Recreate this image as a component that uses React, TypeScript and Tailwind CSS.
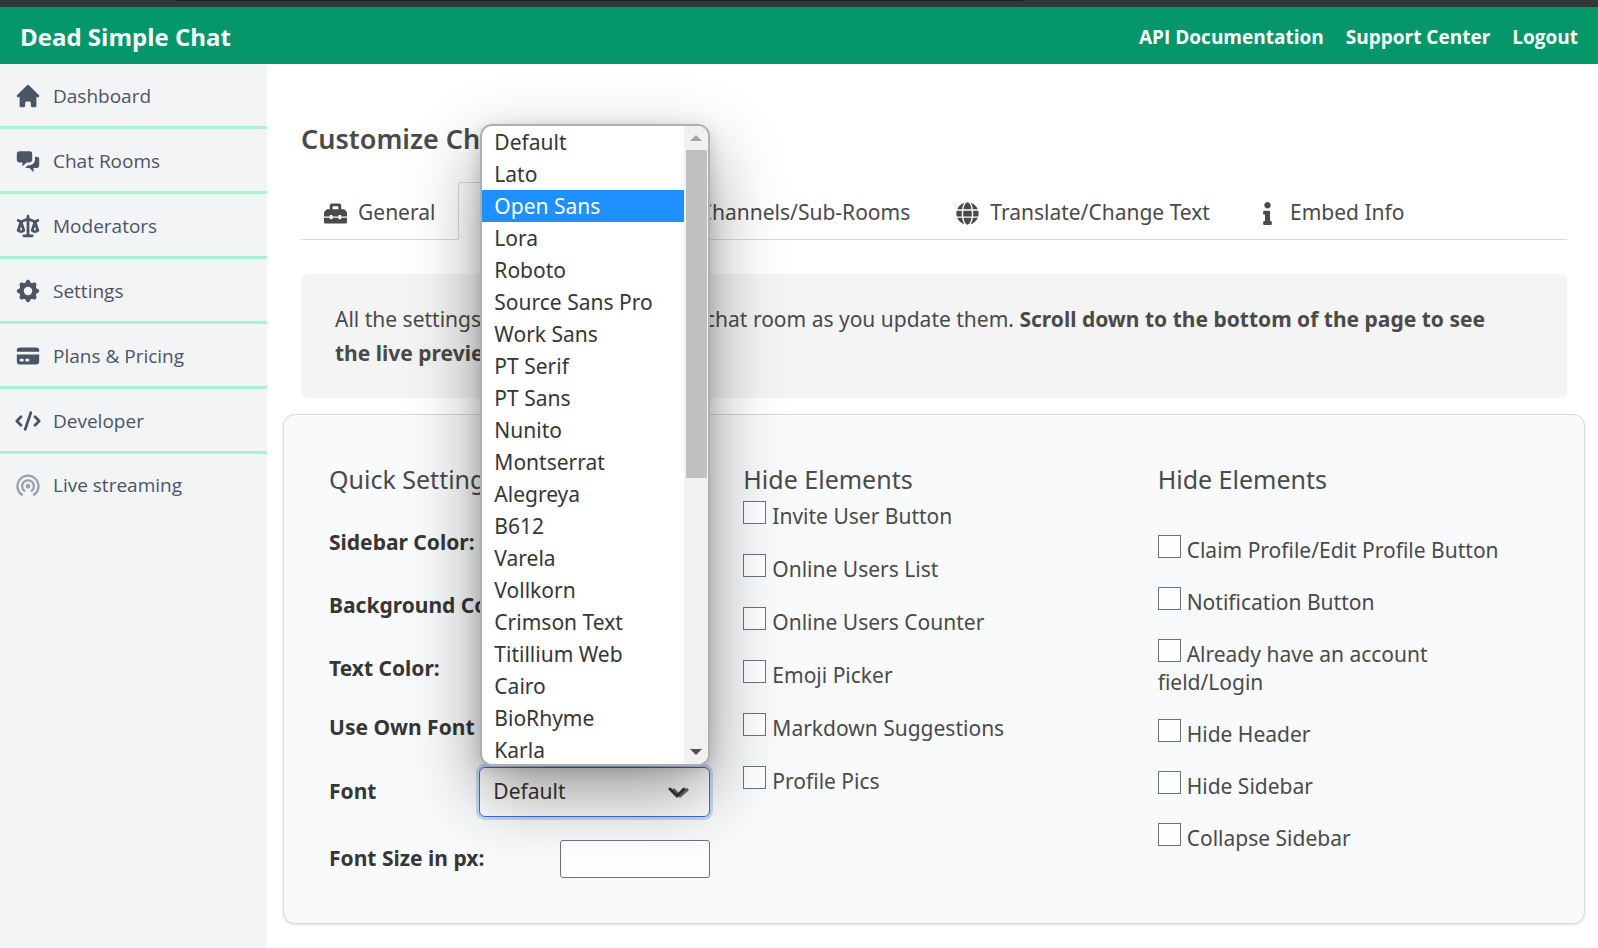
import clsx from "clsx";
import { useState } from "react";
import {
    FaComments,
    FaGlobe,
    FaInfo,
    FaPaintBrush,
    FaToolbox,
} from "react-icons/fa";
import {
    HiChatAlt2,
    HiCode,
    HiCog,
    HiCreditCard,
    HiHome,
    HiScale,
} from "react-icons/hi";
import { MdWifiTethering } from "react-icons/md";

const menu = [
    { label: "Dashboard", icon: HiHome },
    { label: "Chat Rooms", icon: HiChatAlt2 },
    { label: "Moderators", icon: HiScale },
    { label: "Settings", icon: HiCog },
    { label: "Plans & Pricing", icon: HiCreditCard },
    { label: "Developer", icon: HiCode },
    { label: "Live streaming", icon: MdWifiTethering, muted: true },
];

const tabs = [
    { label: "General", icon: FaToolbox },
    { label: "Customize", icon: FaPaintBrush },
    { label: "Channels/Sub-Rooms", icon: FaComments },
    { label: "Translate/Change Text", icon: FaGlobe },
    { label: "Embed Info", icon: FaInfo },
];

const fonts = [
    "Default",
    "Lato",
    "Open Sans",
    "Lora",
    "Roboto",
    "Source Sans Pro",
    "Work Sans",
    "PT Serif",
    "PT Sans",
    "Nunito",
    "Montserrat",
    "Alegreya",
    "B612",
    "Varela",
    "Vollkorn",
    "Crimson Text",
    "Titillium Web",
    "Cairo",
    "BioRhyme",
    "Karla",
];

const hideChat = [
    "Invite User Button",
    "Online Users List",
    "Online Users Counter",
    "Emoji Picker",
    "Markdown Suggestions",
    "Profile Pics",
];

const hideProfile = [
    "Claim Profile/Edit Profile Button",
    "Notification Button",
    "Already have an account field/Login",
    "Hide Header",
    "Hide Sidebar",
    "Collapse Sidebar",
];

function Header() {
    return (
        <header className="flex h-[57px] items-center justify-between bg-[#059669] px-5 pt-[3px] font-['Open_Sans',sans-serif] font-bold text-white">
            <a href="#" className="text-2xl">
                Dead Simple Chat
            </a>
            <nav className="flex gap-[22px] text-[19px]">
                <a href="#">API Documentation</a>
                <a href="#">Support Center</a>
                <a href="#">Logout</a>
            </nav>
        </header>
    );
}

function Sidebar() {
    return (
        <nav className="w-[267px] shrink-0 bg-gray-100 font-['Open_Sans',sans-serif]">
            {menu.map(({ label, icon: Icon, muted }, i) => (
                <a
                    key={label}
                    href="#"
                    className={clsx(
                        "flex items-center gap-[11px] pt-0.5 pl-[14px] text-[19px] font-medium text-gray-600",
                        i < menu.length - 1
                            ? "h-[65px] border-b-3 border-[#a7f3d0]"
                            : "h-[60px]"
                    )}
                >
                    <Icon
                        className={clsx(
                            "size-7 shrink-0",
                            muted && "text-gray-400"
                        )}
                    />
                    {label}
                </a>
            ))}
        </nav>
    );
}

function Tabs() {
    const [active, setActive] = useState("Customize");

    return (
        <div role="tablist" className="flex border-b border-[#dbdbdb]">
            {tabs.map(({ label, icon: Icon }) => (
                <button
                    key={label}
                    role="tab"
                    aria-selected={active === label}
                    onClick={() => setActive(label)}
                    className={clsx(
                        "-mb-px flex h-[58px] items-center gap-[11px] rounded-t border px-[22px] pt-1 whitespace-nowrap",
                        active === label
                            ? "border-[#dbdbdb] border-b-white bg-white"
                            : "border-transparent border-b-[#dbdbdb]"
                    )}
                >
                    <Icon className="size-[23px]" />
                    {label}
                </button>
            ))}
        </div>
    );
}

function HideList({
    items,
    name,
    className,
}: {
    items: string[];
    name: string;
    className: string;
}) {
    return (
        <ul className={clsx("grid leading-7", className)}>
            {items.map((item, i) => (
                <li key={item}>
                    <label htmlFor={`${name}-${i}`}>
                        <input
                            id={`${name}-${i}`}
                            type="checkbox"
                            className="mr-[6px] size-[23px] appearance-none border border-gray-500 bg-white align-baseline"
                        />
                        {item}
                    </label>
                </li>
            ))}
        </ul>
    );
}

function FontMenu() {
    return (
        <div className="absolute right-0 bottom-full left-px z-10 mb-px flex h-[642px] overflow-hidden rounded-xl border-2 border-[#b0b0b0] bg-white shadow-[0_4px_16px_rgba(0,0,0,0.15),0_28px_70px_rgba(0,0,0,0.4)]">
            <ul role="listbox" aria-label="Font" className="min-w-0 grow">
                {fonts.map((font) => (
                    <li
                        key={font}
                        role="option"
                        aria-selected={font === "Open Sans"}
                        className={clsx(
                            "h-8 pl-3 leading-8",
                            font === "Open Sans"
                                ? "bg-[#1e90ff] text-white"
                                : "text-[#363636]"
                        )}
                    >
                        {font}
                    </li>
                ))}
            </ul>
            <div className="flex w-6 flex-col items-center bg-[#f1f1f1]">
                <svg viewBox="0 0 24 24" className="size-6 shrink-0 text-[#a3a3a3]">
                    <path d="M6 15l6-6 6 6z" fill="currentColor" />
                </svg>
                <div className="h-[328px] w-[21px] bg-[#c1c1c1]" />
                <svg viewBox="0 0 24 24" className="mt-auto size-6 shrink-0 text-[#505050]">
                    <path d="M6 9l6 6 6-6z" fill="currentColor" />
                </svg>
            </div>
        </div>
    );
}

function QuickSettings() {
    const label = "font-bold text-[#363636]";

    return (
        <div>
            <h2 className="text-[25px] leading-9">Quick Settings</h2>
            <div className="mt-[14px] flex h-[63px] items-center justify-between">
                <label htmlFor="sidebar-color" className={label}>
                    Sidebar Color:
                </label>
                <input id="sidebar-color" type="color" defaultValue="#2c3e50" className="w-[150px]" />
            </div>
            <div className="flex h-[63px] items-center justify-between">
                <label htmlFor="background-color" className={label}>
                    Background Color:
                </label>
                <input id="background-color" type="color" defaultValue="#ffffff" className="w-[150px]" />
            </div>
            <div className="flex h-[63px] items-center justify-between">
                <label htmlFor="text-color" className={label}>
                    Text Color:
                </label>
                <input id="text-color" type="color" defaultValue="#333333" className="w-[150px]" />
            </div>
            <div className="flex h-14 items-center justify-between">
                <label htmlFor="own-font" className={label}>
                    Use Own Font
                </label>
                <input
                    id="own-font"
                    type="checkbox"
                    className="size-[23px] appearance-none border border-gray-500 bg-white"
                />
            </div>
            <div className="flex h-[72px] items-center justify-between">
                <label htmlFor="font" className={label}>
                    Font
                </label>
                <div className="relative w-[231px]">
                    <select
                        id="font"
                        defaultValue="Default"
                        className="h-[50px] w-full appearance-none rounded-md border border-[#3273dc] bg-white pl-[13px] text-[#363636] ring-3 ring-[#3273dc]/25"
                    >
                        {fonts.map((font) => (
                            <option key={font}>{font}</option>
                        ))}
                    </select>
                    <svg
                        viewBox="0 0 22 12"
                        fill="none"
                        strokeWidth="3"
                        className="pointer-events-none absolute top-5 right-5 h-3 w-[22px]"
                    >
                        <path d="M5 2l7 7 8-7" stroke="#6b7280" />
                        <path d="M2 2l7 7 7-7" stroke="#363636" strokeLinecap="round" />
                    </svg>
                    <FontMenu />
                </div>
            </div>
            <div className="flex h-[62px] items-center justify-between">
                <label htmlFor="font-size" className={label}>
                    Font Size in px:
                </label>
                <input
                    id="font-size"
                    type="text"
                    className="h-[38px] w-[150px] rounded-[3px] border border-gray-500 bg-white px-2"
                />
            </div>
        </div>
    );
}

export default function App() {
    return (
        <div className="flex min-h-screen flex-col bg-white font-['Noto_Sans',sans-serif] text-[21px] text-[#4a4a4a]">
            <div className="h-[7px] bg-[#35363a] pr-[36%] pl-[11%]">
                <div className="h-px bg-[#202124]" />
            </div>
            <Header />
            <div className="flex grow">
                <Sidebar />
                <main className="min-w-0 grow pr-[13px] pl-4">
                    <div className="px-[18px]">
                        <h1 className="mt-[55px] mb-[23px] text-[27px] leading-10 font-semibold">
                            Customize Chat Room
                        </h1>
                        <Tabs />
                        <p className="mt-[34px] rounded-md bg-[#f4f4f4] py-7 pr-[50px] pl-[34px] leading-[34px]">
                            All the settings will be updated in the chat room as
                            you update them.{" "}
                            <strong>
                                Scroll down to the bottom of the page to see the
                                live preview
                            </strong>
                        </p>
                    </div>
                    <section className="mt-4 grid grid-cols-3 gap-x-[33px] rounded-xl border border-[#dbdbdb] bg-gray-50 px-[45px] pt-[46px] pb-[33px] shadow">
                        <QuickSettings />
                        <div>
                            <h2 className="mb-1 text-[25px] leading-9">
                                Hide Elements
                            </h2>
                            <HideList
                                items={hideChat}
                                name="chat"
                                className="content-start gap-6"
                            />
                        </div>
                        <div>
                            <h2 className="mb-[38px] text-[25px] leading-9">
                                Hide Elements
                            </h2>
                            <HideList
                                items={hideProfile}
                                name="profile"
                                className="content-start gap-[23px] pr-4"
                            />
                        </div>
                    </section>
                </main>
            </div>
        </div>
    );
}
